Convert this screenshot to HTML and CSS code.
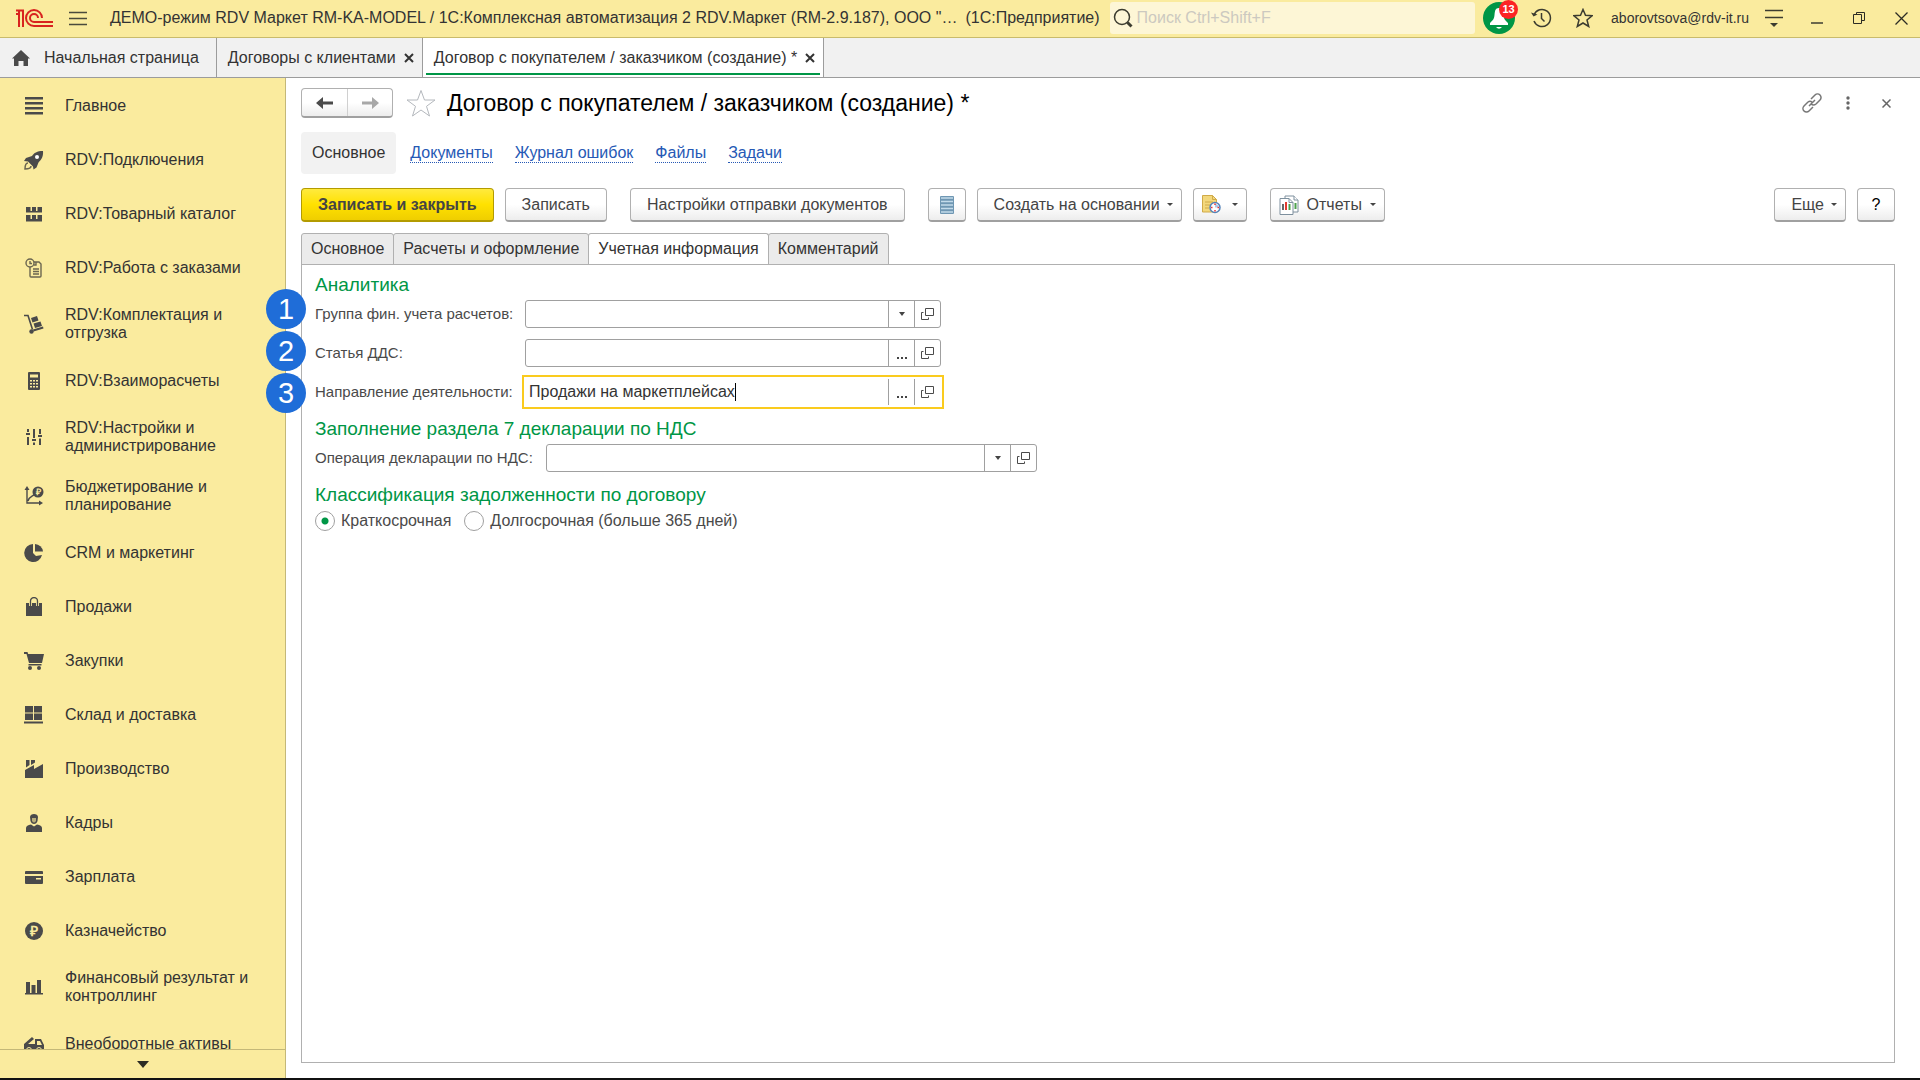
FILE: index.html
```html
<!DOCTYPE html>
<html lang="ru">
<head>
	<meta charset="UTF-8">
	<title>Договор с покупателем / заказчиком (создание) *</title>
	<link rel="stylesheet" href="styles.css">
</head>
<body>
	<svg class="defs" width="0" height="0">
		<symbol id="open" viewBox="0 0 13 13">
			<path d="M4.500 .5h8v7h-8zM2.500 4.500h-2v7h7v-2" fill="none" stroke="#4a4a4a"/>
		</symbol>
		<symbol id="cross" viewBox="0 0 10 10">
			<path d="M1 1l8 8M9 1l-8 8" fill="none" stroke="currentColor" stroke-width="2"/>
		</symbol>
	</svg>

	<header class="titlebar">
		<svg class="logo" width="37" height="19" viewBox="0 0 37 19" fill="none" stroke="#d8231f" stroke-width="2">
			<path d="M0 5h3v13M0 1.500h7V18M3 2v3"/>
			<path d="M26 9a8 8 0 1 0-8 8h19"/>
			<path d="M22 9a4 4 0 1 0-4 4h19"/>
		</svg>
		<button class="icon-btn burger" aria-label="Меню">
			<svg width="18" height="15" viewBox="0 0 18 15" stroke="#4a4a3c" stroke-width="1.500"><path d="M0 1.500h18M0 7.500h18M0 13.500h18"/></svg>
		</button>
		<span class="app-title">ДЕМО-режим RDV Маркет RM-KA-MODEL / 1С:Комплексная автоматизация 2 RDV.Маркет (RM-2.9.187), ООО "…</span>
		<span class="app-kind">(1С:Предприятие)</span>
		<label class="search">
			<svg width="20" height="20" viewBox="0 0 20 20" fill="none" stroke="#3c3c30"><circle cx="9" cy="9" r="7.500" stroke-width="1.500"/><path d="M14.500 14.500l4 4" stroke-width="3"/></svg>
			<input type="text" placeholder="Поиск Ctrl+Shift+F" aria-label="Поиск">
		</label>
		<button class="bell" aria-label="Оповещения">
			<svg width="18" height="24" viewBox="0 0 18 24" fill="#fff"><path d="M9 2c4 0 4 3 4.500 7 .3 4 1.500 5 4.500 8v2H0v-2c3-3 4.200-4 4.500-8C5 5 5 2 9 2zM6 21h6q-3 3.500-6 0z"/></svg>
			<span class="count">13</span>
		</button>
		<button class="icon-btn history" aria-label="История">
			<svg width="21" height="20" viewBox="0 0 21 20" fill="none" stroke="#3c3c30" stroke-width="1.500"><path d="M3 7a8.500 8.500 0 1 1 0 6M10.500 5v5.500l3 3"/><path d="M0 4.500l2.500 4 4-2z" fill="#3c3c30" stroke="none"/></svg>
		</button>
		<button class="icon-btn fav" aria-label="Избранное">
			<svg width="20" height="20" viewBox="0 0 20 20" fill="none" stroke="#3c3c30" stroke-width="1.500"><path d="M10 1.500l2.500 5.800 6.500.5-5 4.200 1.700 6.500L10 15l-5.700 3.500L6 12 1 7.800l6.500-.5z"/></svg>
		</button>
		<a class="user" href="#">aborovtsova@rdv-it.ru</a>
		<button class="icon-btn" aria-label="Настройки">
			<svg width="18" height="20" viewBox="0 0 18 20"><path d="M0 2.500h18M0 9.500h18" stroke="#3c3c30" stroke-width="1.500"/><path d="M5 15h8l-4 4z" fill="#3c3c30"/></svg>
		</button>
		<div class="window-btns">
			<button class="icon-btn" aria-label="Свернуть"><svg width="12" height="12" viewBox="0 0 12 12"><path d="M0 11h12" stroke="#3c3c30" stroke-width="1.500"/></svg></button>
			<button class="icon-btn" aria-label="Развернуть"><svg width="12" height="12" viewBox="0 0 12 12" fill="none" stroke="#2c2c24"><path d="M.5 2.500h8v9h-8zM3.500 2.500v-2h8v8h-3"/></svg></button>
			<button class="icon-btn" aria-label="Закрыть"><svg width="13" height="13" viewBox="0 0 13 13" stroke="#2c2c24" stroke-width="1.300"><path d="M.5 .5l12 12M12.500 .5l-12 12"/></svg></button>
		</div>
	</header>

	<nav class="window-tabs">
		<a class="window-tab home" href="#">
			<svg width="18" height="16" viewBox="0 0 18 16" fill="#4a4a4a"><path d="M9 0l9 8.500h-2V16h-4.500v-5h-5v5H2V8.500H0z"/></svg>
			Начальная страница
		</a>
		<a class="window-tab" href="#">Договоры с клиентами <svg width="10" height="10"><use href="#cross"/></svg></a>
		<a class="window-tab active" href="#">Договор с покупателем / заказчиком (создание) * <svg width="10" height="10"><use href="#cross"/></svg></a>
	</nav>

	<div class="workspace">
		<aside class="sidebar">
			<nav class="sections">
				<a href="#"><svg viewBox="0 0 20 20"><path d="M1 1h18v2.500H1zM1 6h18v2.500H1zM1 11h18v2.500H1zM1 16h18v2.500H1z"/></svg>Главное</a>
				<a href="#"><svg viewBox="0 0 20 20"><path d="M19 1c-6 0-9 2-11 5L2 8l-2 3 4 .5 5 5 .5 3 3-2 2-5c3-3 5-6 4.500-11.500z"/><circle cx="13" cy="7" r="2" fill="#fff"/><path d="M4 13c-3 0-3 3-3 6 3 0 6 0 6-3" fill="none" stroke="#6b6650" stroke-width="1.500"/></svg>RDV:Подключения</a>
				<a href="#"><svg viewBox="0 0 20 20"><path d="M2 3h4.500v4.500H2zM8 3h4v4.500H8zM13.500 3H18v4.500h-4.500zM2 7h16v1.500H2zM2 11h4.500v5H2zM8 11h4v5H8zM13.500 11H18v5h-4.500zM2 15h16v2.500H2z"/></svg>RDV:Товарный каталог</a>
				<a href="#"><svg viewBox="0 0 20 20" fill="none" stroke="#6b6650" stroke-width="1.400"><circle cx="6" cy="5" r="4"/><path d="M6 3v2.500h2M10 4h5l2 2v12a1 1 0 0 1-1 1H7a1 1 0 0 1-1-1v-9M12 4v3h-2M9 11h6M9 13.500h6M9 16h6"/></svg>RDV:Работа с заказами</a>
				<a href="#"><svg viewBox="0 0 20 20"><path d="M0 1.500h4l4.500 14" fill="none" stroke="#4a4a4a" stroke-width="1.600"/><circle cx="7.500" cy="17.500" r="2.200"/><path d="M9 15.500l10-3 .5 2-10 3zM7 4l6-2 1.500 4.500-6 2zM9.500 9.500l7-2 1.500 4.500-7 2z"/></svg>RDV:Комплектация и отгрузка</a>
				<a href="#"><svg viewBox="0 0 20 20"><path fill-rule="evenodd" d="M5 1h10a1 1 0 0 1 1 1v16a1 1 0 0 1-1 1H5a1 1 0 0 1-1-1V2a1 1 0 0 1 1-1zM6 3.500v3h8v-3zM6 9v1.500h2V9zM9 9v1.500h2V9zM12 9v1.500h2V9zM6 12v1.500h2V12zM9 12v1.500h2V12zM12 12v1.500h2V12zM6 15v1.500h2V15zM9 15v1.500h2V15zM12 15v1.500h2V15z"/></svg>RDV:Взаиморасчеты</a>
				<a href="#"><svg viewBox="0 0 20 20"><path d="M3 2h2v3H3zM2 6h4v2H2zM3 10h2v8H3zM9 2h2v9H9zM8 12h4v2H8zM9 15.500h2V18H9zM15 2h2v5h-2zM14 8h4v2h-4zM15 11.500h2V18h-2z"/></svg>RDV:Настройки и администрирование</a>
				<a href="#"><svg viewBox="0 0 20 20"><path d="M3 3v14h13M4 15c1-5 5-4 8-8" fill="none" stroke="#4a4a4a" stroke-width="1.400"/><path d="M3 0l2.500 4h-5zM19 17l-4 2.500v-5z"/><circle cx="14" cy="6" r="5.500"/><text x="14" y="9" text-anchor="middle" font-size="9" font-weight="bold" fill="#faeb9e">₽</text></svg>Бюджетирование и планирование</a>
				<a href="#"><svg viewBox="0 0 20 20"><path d="M9 1v9l3 3 6-1a9 9 0 1 1-9-11z"/><path d="M11 1a8.500 8.500 0 0 1 8 7.500h-8z"/></svg>CRM и маркетинг</a>
				<a href="#"><svg viewBox="0 0 20 20"><path d="M2 6h16v13H2z"/><path d="M6.500 9V4a3.500 3.500 0 0 1 7 0v5" fill="none" stroke="#faeb9e" stroke-width="3"/><path d="M6.500 9V4a3.500 3.500 0 0 1 7 0v5" fill="none" stroke="#4a4a4a" stroke-width="1.300"/></svg>Продажи</a>
				<a href="#"><svg viewBox="0 0 20 20"><path d="M0 1h3.500l.7 2H20l-2 9H5L2.500 3H0zM4.500 13h13v1.500h-13z"/><circle cx="6" cy="17" r="2"/><circle cx="15" cy="17" r="2"/></svg>Закупки</a>
				<a href="#"><svg viewBox="0 0 20 20"><path d="M1 1h8v6.500H1zM10 1h8v6.500h-8zM1 8.500h8V15H1zM10 8.500h8V15h-8zM0 16.500h19v2H0z"/></svg>Склад и доставка</a>
				<a href="#"><svg viewBox="0 0 20 20"><path d="M1 11l9-5v4l9-5v14H1zM2 1h3.500v5L2 8.500zM7 1h4v2.500L7 6z"/></svg>Производство</a>
				<a href="#"><svg viewBox="0 0 20 20"><path d="M6 4c0-4 8-4 8 0l-.5 4c-1 4-6 4-7 0zM2 19v-4c0-2 2-3 5-3.500l3 2 3-2c3 .5 5 1.500 5 3.500v4z"/><path d="M8 5h4v3q-2 3-4 0z" fill="#b9ae79"/></svg>Кадры</a>
				<a href="#"><svg viewBox="0 0 20 20"><path fill-rule="evenodd" d="M2 4h16a1 1 0 0 1 1 1v2H1V5a1 1 0 0 1 1-1zM1 9h18v7a1 1 0 0 1-1 1H2a1 1 0 0 1-1-1zM12 11v1.500h5V11z"/></svg>Зарплата</a>
				<a href="#"><svg viewBox="0 0 20 20"><circle cx="10" cy="10" r="9"/><text x="10" y="15" text-anchor="middle" font-size="14" font-weight="bold" fill="#faeb9e">₽</text></svg>Казначейство</a>
				<a href="#"><svg viewBox="0 0 20 20"><path d="M2 5h4v12H2zM7.500 8h4v9h-4zM13 3h4v14h-4zM1 16h18v1.500H1z"/></svg>Финансовый результат и контроллинг</a>
				<a href="#"><svg viewBox="0 0 20 20"><path fill-rule="evenodd" d="M0 10l8-7 2 2-6 5h7V5h6l3 6v6H0zM13 7v4h5l-2-4z"/><circle cx="5" cy="16" r="2.500" stroke="#faeb9e"/><circle cx="15" cy="16" r="2.500" stroke="#faeb9e"/></svg>Внеоборотные активы</a>
			</nav>
			<button class="scroll-down" aria-label="Прокрутить вниз"><svg width="12" height="7" viewBox="0 0 12 7"><path d="M0 0h12L6 7z" fill="#2c2c24"/></svg></button>
		</aside>

		<main class="form">
			<div class="form-head">
				<div class="nav-btns">
					<button aria-label="Назад"><svg width="18" height="14" viewBox="0 0 18 14"><path d="M0 7l7-6v4.500h10v3H7V13z" fill="#4a4a4a"/></svg></button>
					<button aria-label="Вперед"><svg width="18" height="14" viewBox="0 0 18 14"><path d="M18 7l-7-6v4.500H1v3h10V13z" fill="#a8a8a8"/></svg></button>
				</div>
				<button class="icon-btn star" aria-label="В избранное">
					<svg width="30" height="28" viewBox="0 0 30 28" fill="#fff" stroke="#b4b8bd"><path d="M15 1.500l3.500 9.500H29l-8.500 6.300L23.500 27 15 21l-8.500 6 3-9.700L1 11h10.500z"/></svg>
				</button>
				<h1>Договор с покупателем / заказчиком (создание) *</h1>
				<div class="head-tools">
					<button class="icon-btn" aria-label="Ссылка"><svg width="20" height="20" viewBox="0 0 20 20" fill="none" stroke="#777" stroke-width="1.500"><path d="M9 6l4-4a3.500 3.500 0 0 1 5 5l-4 4q-2.500 2-5 0M11 14l-4 4a3.500 3.500 0 0 1-5-5l4-4q2-1.500 4 0M7 13l6-6"/></svg></button>
					<button class="icon-btn" aria-label="Действия"><svg width="4" height="14" viewBox="0 0 4 14" fill="#666"><circle cx="2" cy="2" r="1.700"/><circle cx="2" cy="7" r="1.700"/><circle cx="2" cy="12" r="1.700"/></svg></button>
					<button class="icon-btn close" aria-label="Закрыть форму"><svg width="9" height="9" viewBox="0 0 9 9" stroke="#666" stroke-width="1.500"><path d="M.5 .5l8 8M8.500 .5l-8 8"/></svg></button>
				</div>
			</div>

			<nav class="page-links">
				<span class="current">Основное</span>
				<a href="#">Документы</a>
				<a href="#">Журнал ошибок</a>
				<a href="#">Файлы</a>
				<a href="#">Задачи</a>
			</nav>

			<div class="toolbar">
				<button class="btn primary">Записать и закрыть</button>
				<button class="btn">Записать</button>
				<button class="btn group">Настройки отправки документов</button>
				<button class="btn square group" aria-label="Список">
					<svg width="14" height="18" viewBox="0 0 14 18"><rect width="14" height="18" rx="1" fill="#6f97b3"/><path d="M1 2h12M1 5.500h12M1 9h12M1 12.500h12M1 16h12" stroke="#c3dbea" stroke-width="1.500"/></svg>
				</button>
				<button class="btn drop">Создать на основании</button>
				<button class="btn drop pic" aria-label="Напоминание">
					<svg width="19" height="19" viewBox="0 0 19 19"><path d="M.5 .5h10l4 4V17H.5z" fill="#f3d87c" stroke="#d0aa48"/><path d="M10.500 .5v4h4M3 7h8M3 10h6M3 13h4" fill="none" stroke="#d0aa48"/><circle cx="13" cy="12.500" r="5" fill="#fff" stroke="#5583b8" stroke-width="1.500"/><path d="M13 12.500V9a3.500 3.500 0 0 1 3.500 3.500z" fill="#a9c9ea"/><path d="M13 8.500v1.500M13 15v1.500M9 12.500h1.500M15.500 12.500H17" stroke="#e33" stroke-width="1.500"/></svg>
				</button>
				<button class="btn drop pic group">
					<svg width="20" height="20" viewBox="0 0 20 20" fill="#fff" stroke="#7e909e"><path d="M6 1h9l4 4v12H6z"/><path d="M15 1v4h4"/><path d="M16.500 8v6" stroke="#4ba04b" stroke-width="2"/><path d="M1 3.500h9l4 4v12H1z"/><path d="M10 3.500v4h4" fill="none"/><path d="M4 9v6" stroke="#666" stroke-width="2"/><path d="M7 7v8" stroke="#e33a2f" stroke-width="2"/><path d="M10.500 9v6" stroke="#4ba04b" stroke-width="2"/></svg>
					Отчеты
				</button>
				<button class="btn drop more">Еще</button>
				<button class="btn square help">?</button>
			</div>

			<div class="tabs" role="tablist">
				<button role="tab">Основное</button>
				<button role="tab">Расчеты и оформление</button>
				<button role="tab" class="active" aria-selected="true">Учетная информация</button>
				<button role="tab">Комментарий</button>
			</div>

			<section class="panel">
				<h2>Аналитика</h2>
				<div class="row">
					<span class="step step-1">1</span>
					<label for="group">Группа фин. учета расчетов:</label>
					<div class="field">
						<input type="text" id="group">
						<button aria-label="Выбрать"><i class="arrow"></i></button>
						<button aria-label="Открыть"><svg width="13" height="13"><use href="#open"/></svg></button>
					</div>
				</div>
				<div class="row">
					<span class="step step-2">2</span>
					<label for="dds">Статья ДДС:</label>
					<div class="field">
						<input type="text" id="dds">
						<button aria-label="Выбрать"><i class="dots"></i></button>
						<button aria-label="Открыть"><svg width="13" height="13"><use href="#open"/></svg></button>
					</div>
				</div>
				<div class="row">
					<span class="step step-3">3</span>
					<label for="direction">Направление деятельности:</label>
					<div class="field focused">
						<input type="text" id="direction" value="Продажи на маркетплейсах">
						<i class="caret"></i>
						<button aria-label="Выбрать"><i class="dots"></i></button>
						<button aria-label="Открыть"><svg width="13" height="13"><use href="#open"/></svg></button>
					</div>
				</div>

				<h2>Заполнение раздела 7 декларации по НДС</h2>
				<div class="row wide">
					<label for="vat">Операция декларации по НДС:</label>
					<div class="field">
						<input type="text" id="vat">
						<button aria-label="Выбрать"><i class="arrow"></i></button>
						<button aria-label="Открыть"><svg width="13" height="13"><use href="#open"/></svg></button>
					</div>
				</div>

				<h2>Классификация задолженности по договору</h2>
				<div class="radios">
					<label><input type="radio" name="term" checked>Краткосрочная</label>
					<label><input type="radio" name="term">Долгосрочная (больше 365 дней)</label>
				</div>
			</section>
		</main>
	</div>
</body>
</html>
```
FILE: styles.css
```css
*{
	box-sizing: border-box;
}
body{
	margin: 0;
	height: 100vh;
	display: flex;
	flex-direction: column;
	overflow: hidden;
	border-bottom: 2px solid #111;
	background: #fff;
	color: #333;
	font: 16px/18px "Liberation Sans", Arial, sans-serif;
}
button, input{
	font: inherit;
	color: inherit;
}
button{
	padding: 0;
	cursor: pointer;
}
a{
	color: inherit;
	text-decoration: none;
}
svg{
	flex: none;
	display: block;
}
.defs{
	position: absolute;
}
.icon-btn{
	flex: none;
	border: 0;
	background: none;
}

/* верхняя панель */
.titlebar{
	flex: none;
	display: flex;
	align-items: center;
	height: 38px;
	padding: 0 12px 1px 16px;
	background: #faeb9e;
	border-bottom: 1px solid #c9bb6c;
}
.burger{
	margin: 0 23px 0 16px;
}
.app-title{
	white-space: nowrap;
}
.app-kind{
	margin: 0 10px 0 8px;
	white-space: nowrap;
}
.search{
	flex: 1;
	display: flex;
	align-items: center;
	height: 32px;
	padding-left: 3px;
	border-radius: 3px;
	background: #fdf6d6;
}
.search input{
	flex: 1;
	min-width: 0;
	padding: 0 4px;
	border: 0;
	outline: 0;
	background: none;
}
.search input::placeholder{
	color: #ccc9c0;
}
.bell{
	position: relative;
	display: flex;
	justify-content: center;
	align-items: center;
	width: 32px;
	height: 32px;
	margin: 0 16px 0 8px;
	border: 0;
	border-radius: 50%;
	background: #009646;
}
.count{
	position: absolute;
	top: -2px;
	right: -3px;
	width: 19px;
	height: 19px;
	border-radius: 50%;
	background: #fb2424;
	color: #fff;
	font-size: 11px;
	font-weight: bold;
	line-height: 19px;
}
.fav{
	margin: 0 18px 0 21px;
}
.user{
	margin-right: 16px;
	font-size: 14px;
}
.window-btns{
	display: flex;
	align-items: center;
	gap: 30px;
	margin-left: 28px;
}

/* вкладки окон */
.window-tabs{
	flex: none;
	display: flex;
	height: 40px;
	background: #f1f1f1;
	border-bottom: 1px solid #9c9c9c;
}
.window-tab{
	display: flex;
	align-items: center;
	gap: 8px;
	padding: 0 8px 0 11px;
	border-right: 1px solid #9c9c9c;
	white-space: nowrap;
}
.window-tab.home{
	gap: 14px;
	padding: 0 17px 0 12px;
}
.window-tab.active{
	background: linear-gradient(#009646, #009646) center bottom 2px / calc(100% - 6px) 2px no-repeat #fff;
}

/* разделы */
.workspace{
	flex: 1;
	min-height: 0;
	display: flex;
}
.sidebar{
	flex: none;
	display: flex;
	flex-direction: column;
	width: 286px;
	background: #faeb9e;
	border-right: 1px solid #c4b878;
}
.sections{
	flex: 1;
	min-height: 0;
	overflow: hidden;
}
.sections a{
	display: flex;
	align-items: center;
	gap: 21px;
	min-height: 54px;
	padding: 12px 30px 11px 24px;
}
.sections svg{
	width: 20px;
	height: 20px;
	fill: #4a4a4a;
}
.sections svg[fill="none"]{
	fill: none;
}
.scroll-down{
	display: flex;
	justify-content: center;
	align-items: center;
	height: 29px;
	border: 0;
	border-top: 1px solid #c4b878;
	background: none;
}

/* форма */
.form{
	flex: 1;
	min-width: 0;
	display: flex;
	flex-direction: column;
	padding: 10px 25px 15px 15px;
}
.form-head{
	display: flex;
	align-items: center;
	height: 30px;
}
.nav-btns{
	display: flex;
	height: 30px;
	border: 1px solid #b0b0b0;
	border-bottom: 2px solid #a0a0a0;
	border-radius: 4px;
	background: linear-gradient(#fff 50%, #ededed);
}
.nav-btns button{
	display: flex;
	justify-content: center;
	align-items: center;
	width: 45px;
	border: 0;
	background: none;
}
.nav-btns button + button{
	border-left: 1px solid #d0d0d0;
}
.star{
	margin: 0 11px 0 13px;
}
h1{
	margin: 0;
	color: #000;
	font-size: 23px;
	font-weight: normal;
	line-height: 28px;
	white-space: nowrap;
}
.head-tools{
	display: flex;
	align-items: center;
	gap: 24px;
	margin: 0 4px 0 auto;
}
.head-tools .close{
	margin-left: 8px;
}
.page-links{
	display: flex;
	align-items: center;
	gap: 22px;
	margin-top: 14px;
}
.page-links .current{
	margin-right: -8px;
	padding: 12px 11px;
	border-radius: 4px;
	background: #f2f2f2;
}
.page-links a{
	color: #2659b5;
	border-bottom: 1px dotted #2659b5;
}
.toolbar{
	display: flex;
	gap: 11px;
	margin-top: 14px;
}
.btn{
	display: flex;
	justify-content: center;
	align-items: center;
	height: 34px;
	padding: 0 16px;
	border: 1px solid #b0b0b0;
	border-bottom: 2px solid #a0a0a0;
	border-radius: 4px;
	background: linear-gradient(#fff 50%, #ededed);
	color: #444;
	white-space: nowrap;
}
.btn.primary{
	border-color: #b39b00;
	background: linear-gradient(#ffea3e, #ffe100 50%, #efce00);
	font-weight: bold;
}
.btn.group{
	margin-left: 12px;
}
.btn.square{
	width: 38px;
	padding: 0;
}
.btn.drop{
	padding-right: 8px;
}
.btn.drop::after{
	content: "";
	margin-left: 7px;
	border: 3px solid transparent;
	border-top-color: #444;
	border-bottom: 0;
}
.btn.pic{
	gap: 8px;
	padding-left: 8px;
}
.btn.pic::after{
	margin-left: 0;
}
.btn.pic[aria-label]::after{
	margin-left: 3px;
}
.btn.more{
	margin-left: auto;
}
.btn.help{
	color: #000;
}
.tabs{
	display: flex;
	margin-top: 11px;
}
.tabs button{
	height: 32px;
	margin: 0 0 -1px -1px;
	padding: 0 9px;
	border: 1px solid #b0b0b0;
	border-radius: 3px 3px 0 0;
	background: #ebebeb;
}
.tabs button:first-child{
	margin-left: 0;
}
.tabs .active{
	background: #fff;
	border-bottom-color: #fff;
}
.panel{
	flex: 1;
	padding: 8px 13px;
	border: 1px solid #b0b0b0;
}
h2{
	margin: 0;
	color: #009646;
	font-size: 19px;
	font-weight: normal;
	line-height: 24px;
}
.row{
	position: relative;
	display: flex;
	align-items: center;
	margin: 3px 0 11px;
	color: #4a4a4a;
}
.row label{
	width: 210px;
	font-size: 15px;
	white-space: nowrap;
}
.row.wide label{
	width: 231px;
}
.field{
	position: relative;
	display: flex;
	width: 416px;
	height: 28px;
	border: 1px solid #a0a0a0;
	border-radius: 3px;
}
.wide .field{
	width: 491px;
}
.field input{
	flex: 1;
	min-width: 0;
	padding: 0 3px;
	border: 0;
	outline: 0;
	background: none;
	color: #333;
}
.field button{
	display: flex;
	justify-content: center;
	align-items: center;
	width: 26px;
	border: 0;
	border-left: 1px solid #a0a0a0;
	background: none;
}
.field.focused{
	border-color: transparent;
	border-radius: 0;
	outline: 2px solid #facb1e;
	outline-offset: 1px;
}
.caret{
	position: absolute;
	top: 4px;
	left: 209px;
	width: 1px;
	height: 18px;
	background: #000;
}
.arrow{
	border: 3px solid transparent;
	border-top: 4px solid #444;
	border-bottom: 0;
}
.dots{
	width: 10px;
	height: 2px;
	margin-top: 9px;
	background: repeating-linear-gradient(90deg, #444 0 2px, transparent 2px 4px);
}
/* номера шагов поверх формы */
.step{
	position: absolute;
	left: -49px;
	width: 40px;
	height: 40px;
	border-radius: 50%;
	background: #1f6dd8;
	color: #fff;
	font-size: 29px;
	line-height: 40px;
	text-align: center;
}
.step-1{
	top: -11px;
}
.step-2{
	top: -8px;
}
.step-3{
	top: -5px;
}
.radios{
	display: flex;
	gap: 13px;
	margin-top: 4px;
	color: #4a4a4a;
}
.radios label{
	display: flex;
	align-items: center;
	gap: 6px;
}
.radios input{
	appearance: none;
	width: 20px;
	height: 20px;
	margin: 0;
	border: 1px solid #a0a0a0;
	border-radius: 50%;
}
.radios input:checked{
	background: radial-gradient(#009646 3px, #fff 4px);
}
```
